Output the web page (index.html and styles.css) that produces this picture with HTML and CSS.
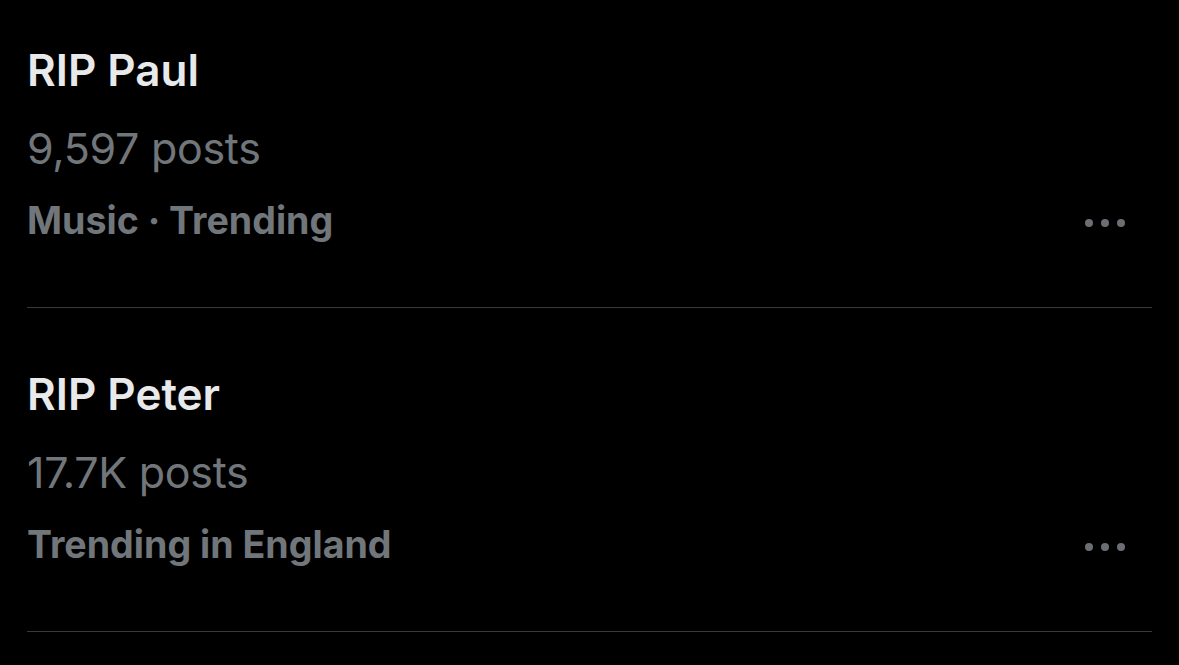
FILE: index.html
```html
<!DOCTYPE html>
<html>
<head>
<meta charset="utf-8">
<link rel="stylesheet" href="styles.css">
</head>
<body>
<div class="list">
  <div class="trend">
    <div class="info">
      <div class="title">RIP Paul</div>
      <div class="count">9,597 posts</div>
      <div class="meta">Music · Trending</div>
    </div>
    <div class="more"><span></span><span></span><span></span></div>
  </div>
  <div class="trend">
    <div class="info">
      <div class="title">RIP Peter</div>
      <div class="count">17.7K posts</div>
      <div class="meta">Trending in England</div>
    </div>
    <div class="more"><span></span><span></span><span></span></div>
  </div>
</div>
</body>
</html>
```
FILE: styles.css
```css
html, body {
  margin: 0;
  padding: 0;
  background: #000;
  height: 100%;
}
body {
  font-family: Inter, "Noto Sans", sans-serif;
  overflow: hidden;
}
.list {
  padding: 0 27px;
}
.trend {
  display: flex;
  align-items: flex-end;
  justify-content: space-between;
  border-bottom: 1px solid #36393d;
  padding: 60px 0 63px;
}
.trend:first-child {
  padding-top: 44px;
}
.title {
  color: #e7e9ea;
  font-size: 44px;
  font-weight: 600;
  line-height: 52px;
}
.count {
  color: #71767b;
  font-size: 43px;
  font-weight: 400;
  line-height: 52px;
  margin-top: 26px;
  letter-spacing: -0.3px;
}
.meta {
  color: #71767b;
  font-size: 37.6px;
  font-weight: 700;
  line-height: 46px;
  margin-top: 24px;
}
.more {
  display: flex;
  gap: 8px;
  margin-right: 27px;
  margin-bottom: 17px;
}
.more span {
  width: 8px;
  height: 8px;
  border-radius: 50%;
  background: #6b6e72;
}
```
